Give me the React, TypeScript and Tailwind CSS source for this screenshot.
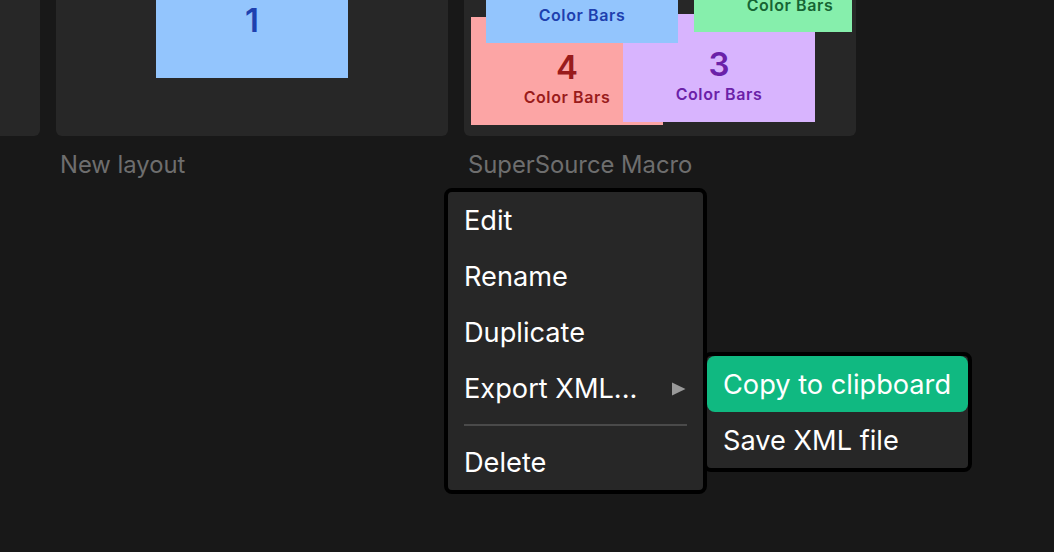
const menuItem = 'flex h-14 items-center rounded-lg px-4 pt-[2px] text-[27.2px] text-white'

function Layer({ pos, bg, color, num }: { pos: string; bg: string; color: string; num: string }) {
  return (
    <div className={`absolute flex h-[108px] w-[192px] flex-col items-center pt-[31px] font-semibold ${pos} ${bg} ${color}`}>
      <span className="text-[33px] leading-[38px]">{num}</span>
      <span className="text-[16px] leading-[22px] tracking-[0.6px]">Color Bars</span>
    </div>
  )
}

function Card({ label, children }: { label: string; children?: React.ReactNode }) {
  return (
    <div className="w-[392px] shrink-0">
      <div className="relative h-[136px] overflow-hidden rounded-b-md bg-[#272727]">{children}</div>
      <p className="mt-[15px] h-7 px-1 text-[23.8px] leading-[28px] text-[#6e6e6e]">{label}</p>
    </div>
  )
}

export default function App() {
  return (
    <div className="relative h-[552px] w-[1054px] overflow-hidden bg-[#181818] font-['Inter',sans-serif]">
      <div className="ml-[-352px] flex gap-4">
        <Card label="" />
        <Card label="New layout">
          <div className="absolute left-[100px] top-[-30px] flex h-[108px] w-[192px] flex-col items-center bg-[#93c5fd] pt-[31px] font-semibold text-[#1e40af]">
            <span className="text-[33px] leading-[38px]">1</span>
          </div>
        </Card>
        <Card label="SuperSource Macro">
          <Layer pos="left-[7px] top-[17px]" bg="bg-[#fca5a5]" color="text-[#991b1b]" num="4" />
          <Layer pos="left-[159px] top-[14px]" bg="bg-[#d8b4fe]" color="text-[#6b21a8]" num="3" />
          <Layer pos="left-[22px] top-[-65px]" bg="bg-[#93c5fd]" color="text-[#1e40af]" num="1" />
          <div className="absolute left-[230px] top-[-76px] h-[108px] w-[158px] overflow-hidden">
            <Layer pos="left-0 top-[1px]" bg="bg-[#86efac]" color="text-[#166534]" num="2" />
          </div>
        </Card>
      </div>

      <div className="absolute left-[444px] top-[188px] w-[263px] rounded-lg border-4 border-black bg-[#272727]">
        <div className={menuItem}>Edit</div>
        <div className={menuItem}>Rename</div>
        <div className={menuItem}>Duplicate</div>
        <div className={`${menuItem} justify-between`}>
          Export XML...
          <svg width="14" height="14" viewBox="0 0 14 14" className="mr-px">
            <path d="M0 0.5 L13.5 7 L0 13.5 Z" fill="#999999" />
          </svg>
        </div>
        <div className="mx-4 my-[8px] h-0.5 bg-[#4a4a4a]" />
        <div className={menuItem}>Delete</div>
      </div>

      <div className="absolute left-[703px] top-[352px] w-[269px] rounded-lg border-4 border-black bg-[#272727]">
        <div className={`${menuItem} bg-[#10b981]`}>Copy to clipboard</div>
        <div className={menuItem}>Save XML file</div>
      </div>
    </div>
  )
}
